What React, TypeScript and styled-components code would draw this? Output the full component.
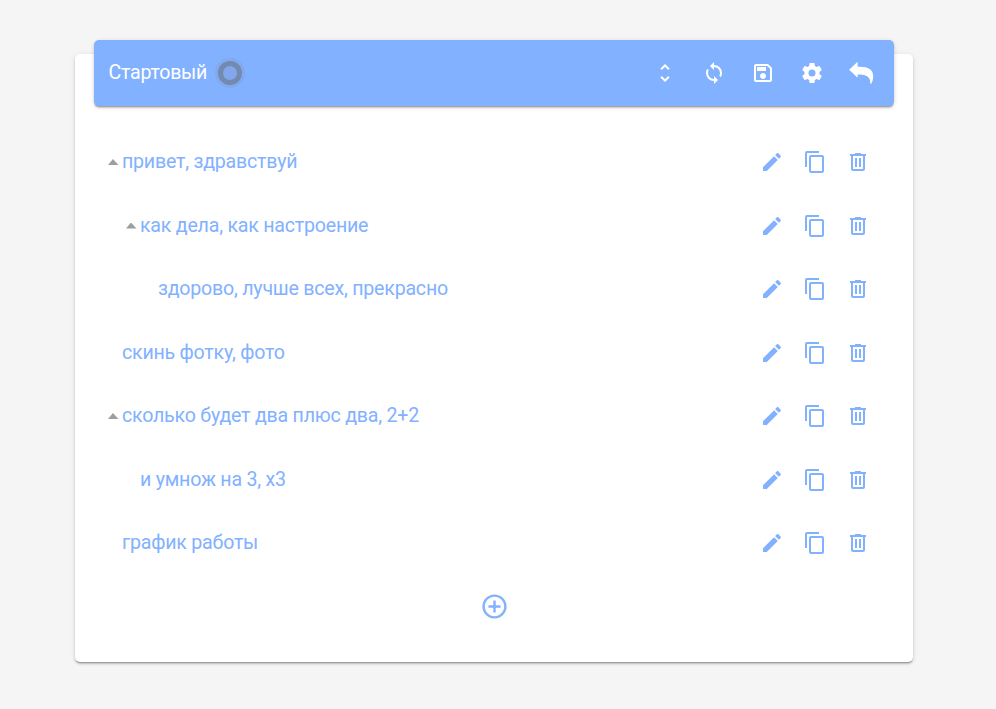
import React from "react";
import styled, { createGlobalStyle } from "styled-components";

const GlobalStyle = createGlobalStyle`
  *, *::before, *::after { box-sizing: border-box; }
  body {
    margin: 0;
    background: #f5f5f5;
    font-family: Roboto, "Liberation Sans", sans-serif;
  }
`;

const BLUE = "#82b1ff";
const SHADOW =
  "0 2px 1px -1px rgba(0,0,0,.2), 0 2px 2px 0 rgba(0,0,0,.16), 0 1px 5px 0 rgba(0,0,0,.12)";

const ICONS = {
  unfold:
    "M12,18.17L8.83,15L7.42,16.41L12,21L16.59,16.41L15.17,15M12,5.83L15.17,9L16.58,7.59L12,3L7.41,7.59L8.83,9L12,5.83Z",
  sync: "M12,18A6,6 0 0,1 6,12C6,11 6.25,10.03 6.7,9.2L5.24,7.74C4.46,8.97 4,10.43 4,12A8,8 0 0,0 12,20V23L16,19L12,15M12,4V1L8,5L12,9V6A6,6 0 0,1 18,12C18,13 17.75,13.97 17.3,14.8L18.76,16.26C19.54,15.03 20,13.57 20,12A8,8 0 0,0 12,4Z",
  save: "M17 3H5C3.89 3 3 3.9 3 5V19C3 20.1 3.89 21 5 21H19C20.1 21 21 20.1 21 19V7L17 3M19 19H5V5H16.17L19 7.83V19M12 12C10.34 12 9 13.34 9 15S10.34 18 12 18 15 16.66 15 15 13.66 12 12 12M6 6H15V10H6V6Z",
  cog: "M12,15.5A3.5,3.5 0 0,1 8.5,12A3.5,3.5 0 0,1 12,8.5A3.5,3.5 0 0,1 15.5,12A3.5,3.5 0 0,1 12,15.5M19.43,12.97C19.47,12.65 19.5,12.33 19.5,12C19.5,11.67 19.47,11.34 19.43,11L21.54,9.37C21.73,9.22 21.78,8.95 21.66,8.73L19.66,5.27C19.54,5.05 19.27,4.96 19.05,5.05L16.56,6.05C16.04,5.66 15.5,5.32 14.87,5.07L14.5,2.42C14.46,2.18 14.25,2 14,2H10C9.75,2 9.54,2.18 9.5,2.42L9.13,5.07C8.5,5.32 7.96,5.66 7.44,6.05L4.95,5.05C4.73,4.96 4.46,5.05 4.34,5.27L2.34,8.73C2.21,8.95 2.27,9.22 2.46,9.37L4.57,11C4.53,11.34 4.5,11.67 4.5,12C4.5,12.33 4.53,12.65 4.57,12.97L2.46,14.63C2.27,14.78 2.21,15.05 2.34,15.27L4.34,18.73C4.46,18.95 4.73,19.03 4.95,18.95L7.44,17.94C7.96,18.34 8.5,18.68 9.13,18.93L9.5,21.58C9.54,21.82 9.75,22 10,22H14C14.25,22 14.46,21.82 14.5,21.58L14.87,18.93C15.5,18.67 16.04,18.34 16.56,17.94L19.05,18.95C19.27,19.03 19.54,18.95 19.66,18.73L21.66,15.27C21.78,15.05 21.73,14.78 21.54,14.63L19.43,12.97Z",
  reply:
    "M8.6 .8V5.7H11C19 5.7 24.2 8.4 24.2 15.2C24.2 18.2 23.4 20.9 22.2 22.8C21.8 23.4 21.4 23.1 21.4 22.5C21.6 17 18.5 13.8 11 13.6H8.6V16.7L0.1 8.8Z",
  pencil:
    "M20.71,7.04C21.1,6.65 21.1,6 20.71,5.63L18.37,3.29C18,2.9 17.35,2.9 16.96,3.29L15.12,5.12L18.87,8.87M3,17.25V21H6.75L17.81,9.93L14.06,6.18L3,17.25Z",
  copy: "M19,21H8V7H19M19,5H8A2,2 0 0,0 6,7V21A2,2 0 0,0 8,23H19A2,2 0 0,0 21,21V7A2,2 0 0,0 19,5M16,1H4A2,2 0 0,0 2,3V17H4V3H16V1Z",
  trash:
    "M9,3V4H4V6H5V19A2,2 0 0,0 7,21H17A2,2 0 0,0 19,19V6H20V4H15V3H9M7,6H17V19H7V6M9,8V17H11V8H9M13,8V17H15V8H13Z",
  add: "M12,20C7.59,20 4,16.41 4,12C4,7.59 7.59,4 12,4C16.41,4 20,7.59 20,12C20,16.41 16.41,20 12,20M12,2A10,10 0 0,0 2,12A10,10 0 0,0 12,22A10,10 0 0,0 22,12A10,10 0 0,0 12,2M13,7H11V11H7V13H11V17H13V13H17V11H13V7Z",
};

type IconName = keyof typeof ICONS;

const Svg = styled.svg<{ $size: number }>`
  display: block;
  width: ${(p) => p.$size}px;
  height: ${(p) => p.$size}px;
  fill: currentColor;
  overflow: visible;
`;

const Icon = ({ name, size = 24 }: { name: IconName; size?: number }) => (
  <Svg $size={size} viewBox="0 0 24 24" aria-hidden="true">
    <path d={ICONS[name]} />
  </Svg>
);

const Page = styled.div`
  min-height: 100vh;
  padding: 54px 0 0 75.4px;
  background: #f5f5f5;
`;

const Card = styled.main`
  display: flex;
  flex-direction: column;
  width: 838px;
  height: 608px;
  padding: 0 19px;
  border-radius: 5px;
  background: #fff;
  box-shadow: ${SHADOW};
`;

const Toolbar = styled.header`
  display: flex;
  align-items: center;
  flex: none;
  height: 66px;
  margin-top: -14px;
  padding: 0 21.4px 0 14.2px;
  border-radius: 5px;
  background: ${BLUE};
  color: #fff;
  box-shadow: ${SHADOW};
`;

const Title = styled.h1`
  margin: 0;
  font-size: 19.6px;
  font-weight: 400;
  line-height: 24px;
  letter-spacing: -0.26px;
`;

const StatusRing = styled.span`
  width: 24px;
  height: 24px;
  margin: 0 0 1px 11px;
  border: 5px solid rgba(97, 97, 97, 0.5);
  border-radius: 50%;
  background: rgba(130, 140, 170, 0.25);
  background-clip: padding-box;
  box-shadow: 0 0 0 3px rgba(130, 140, 170, 0.2);
`;

const ToolbarActions = styled.div`
  display: flex;
  gap: 25px;
  margin-left: auto;
`;

const IconButton = styled.button`
  padding: 0;
  border: 0;
  background: none;
  color: inherit;
  cursor: pointer;
`;

const Tree = styled.ul`
  margin: 24.3px 0 0;
  padding: 0;
  list-style: none;
  color: ${BLUE};
`;

const Row = styled.li<{ $level: number }>`
  display: flex;
  align-items: center;
  height: 63.5px;
  padding: 0 24.4px 0 ${(p) => 13.6 + p.$level * 18}px;
`;

const Caret = styled.span<{ $visible: boolean }>`
  width: 11px;
  height: 6px;
  margin-right: 3px;
  background: #9e9e9e;
  clip-path: polygon(45% 0, 95% 100%, 0 100%);
  visibility: ${(p) => (p.$visible ? "visible" : "hidden")};
`;

const Label = styled.span`
  font-size: 19.6px;
  line-height: 24px;
  letter-spacing: -0.22px;
  white-space: nowrap;
`;

const RowActions = styled.div`
  display: flex;
  gap: 19px;
  margin-left: auto;
`;

const AddRow = styled.div`
  display: flex;
  justify-content: center;
  margin-top: 17.2px;
  color: ${BLUE};
`;

const rows = [
  { text: "привет, здравствуй", level: 0, open: true },
  { text: "как дела, как настроение", level: 1, open: true },
  { text: "здорово, лучше всех, прекрасно", level: 2, open: false },
  { text: "скинь фотку, фото", level: 0, open: false },
  { text: "сколько будет два плюс два, 2+2", level: 0, open: true },
  { text: "и умнож на 3, х3", level: 1, open: false },
  { text: "график работы", level: 0, open: false },
];

const toolbarIcons: IconName[] = ["unfold", "sync", "save", "cog", "reply"];
const rowIcons: IconName[] = ["pencil", "copy", "trash"];

export default function App() {
  return (
    <Page>
      <GlobalStyle />
      <Card>
        <Toolbar>
          <Title>Стартовый</Title>
          <StatusRing />
          <ToolbarActions>
            {toolbarIcons.map((name) => (
              <IconButton key={name}>
                <Icon name={name} />
              </IconButton>
            ))}
          </ToolbarActions>
        </Toolbar>
        <Tree>
          {rows.map((row) => (
            <Row key={row.text} $level={row.level}>
              <Caret $visible={row.open} />
              <Label>{row.text}</Label>
              <RowActions>
                {rowIcons.map((name) => (
                  <IconButton key={name}>
                    <Icon name={name} />
                  </IconButton>
                ))}
              </RowActions>
            </Row>
          ))}
        </Tree>
        <AddRow>
          <IconButton>
            <Icon name="add" size={29} />
          </IconButton>
        </AddRow>
      </Card>
    </Page>
  );
}
